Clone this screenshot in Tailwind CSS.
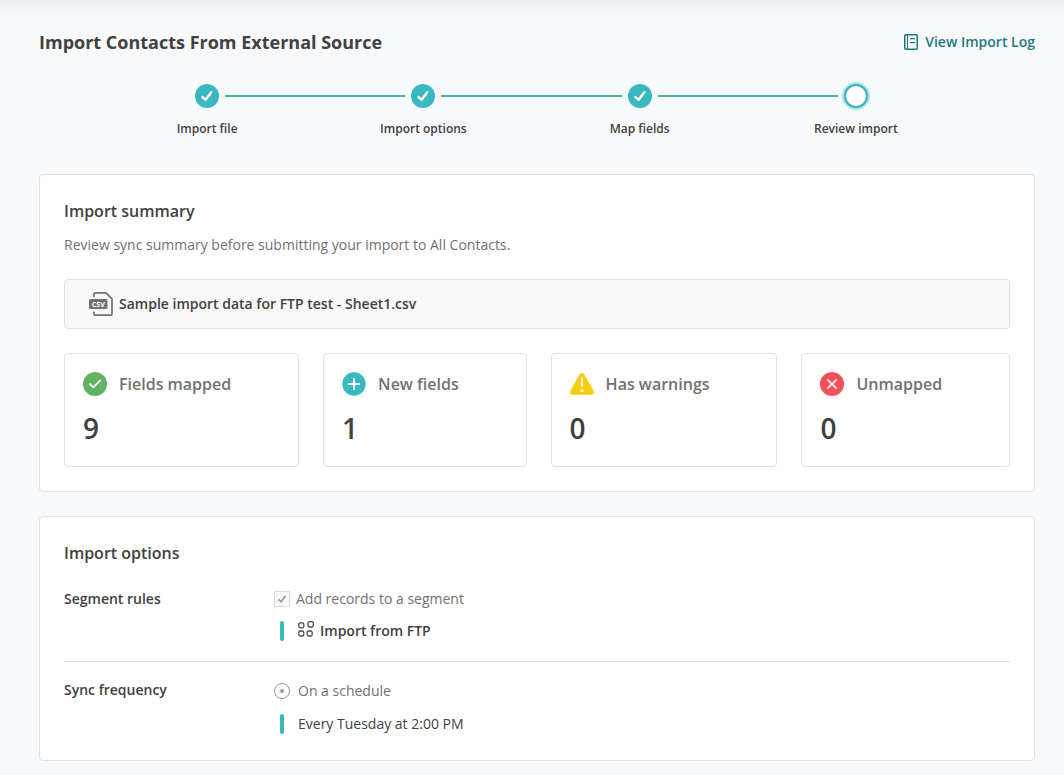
<!DOCTYPE html>
<html lang="en">
<head>
  <meta charset="UTF-8">
  <meta name="viewport" content="width=device-width, initial-scale=1.0">
  <title>Import Contacts From External Source</title>
  <script src="https://cdn.jsdelivr.net/npm/@tailwindcss/browser@4"></script>
</head>
<body class="min-h-screen bg-[#f8f9fb] font-['Open_Sans',sans-serif] text-sm text-[#414141]">
  <div class="h-4 bg-linear-to-b from-[#e9eef4] to-[#f8f9fb]"></div>

  <main class="pl-[39px] pr-[29px] pb-[14px]">
    <!-- Header -->
    <header class="flex items-center justify-between pt-[14px]">
      <h1 class="text-lg leading-6 font-bold">Import Contacts From External Source</h1>
      <a href="#" class="flex items-center gap-[7px] leading-5 font-semibold text-[#1f7a7e]">
        <svg class="w-[14px] h-4" viewBox="0 0 14 16" fill="none" stroke="currentColor">
          <rect x="0.75" y="0.75" width="12.5" height="14.5" rx="1" stroke-width="1.5"/>
          <path d="M3.5 1v14" stroke-width="1.1"/>
          <path d="M6 4.7h5M6 8.7h5" stroke-width="1.2"/>
        </svg>
        View Import Log
      </a>
    </header>

    <!-- Progress steps -->
    <ol class="mt-[30px] ml-[60px] mr-[71px] grid grid-cols-4 text-center text-xs leading-5 font-semibold">
      <li>
        <div class="flex items-center">
          <span class="h-0.5 flex-1"></span>
          <svg class="mx-1.5 size-6" viewBox="0 0 24 24" fill="none">
            <circle cx="12" cy="12" r="12" fill="#3ab8be"/>
            <path d="M7.4 13l3.3 2.8 5.6-7.6" stroke="#fff" stroke-width="2.3" stroke-linecap="round" stroke-linejoin="round"/>
          </svg>
          <span class="h-0.5 flex-1 bg-[#4fb0b5]"></span>
        </div>
        <p class="mt-[11px]">Import file</p>
      </li>
      <li>
        <div class="flex items-center">
          <span class="h-0.5 flex-1 bg-[#4fb0b5]"></span>
          <svg class="mx-1.5 size-6" viewBox="0 0 24 24" fill="none">
            <circle cx="12" cy="12" r="12" fill="#3ab8be"/>
            <path d="M7.4 13l3.3 2.8 5.6-7.6" stroke="#fff" stroke-width="2.3" stroke-linecap="round" stroke-linejoin="round"/>
          </svg>
          <span class="h-0.5 flex-1 bg-[#4fb0b5]"></span>
        </div>
        <p class="mt-[11px]">Import options</p>
      </li>
      <li>
        <div class="flex items-center">
          <span class="h-0.5 flex-1 bg-[#4fb0b5]"></span>
          <svg class="mx-1.5 size-6" viewBox="0 0 24 24" fill="none">
            <circle cx="12" cy="12" r="12" fill="#3ab8be"/>
            <path d="M7.4 13l3.3 2.8 5.6-7.6" stroke="#fff" stroke-width="2.3" stroke-linecap="round" stroke-linejoin="round"/>
          </svg>
          <span class="h-0.5 flex-1 bg-[#4fb0b5]"></span>
        </div>
        <p class="mt-[11px]">Map fields</p>
      </li>
      <li>
        <div class="flex items-center">
          <span class="h-0.5 flex-1 bg-[#4fb0b5]"></span>
          <span class="mx-1.5 size-6 rounded-full border-2 border-[#3ab3b9] bg-white ring-2 ring-[#a6e9e9]"></span>
          <span class="h-0.5 flex-1"></span>
        </div>
        <p class="mt-[11px]">Review import</p>
      </li>
    </ol>

    <!-- Import summary -->
    <section class="mt-[35px] rounded border border-[#e0e1e3] bg-white p-6">
      <h2 class="text-base leading-6 font-semibold">Import summary</h2>
      <p class="mt-3 leading-5 text-[#717171]">Review sync summary before submitting your import to All Contacts.</p>

      <div class="mt-6 flex h-[50px] items-center gap-1.5 rounded border border-[#e0e1e3] bg-[#f8f8f8] px-6 font-semibold">
        <svg class="size-6" viewBox="0 0 24 24" fill="none">
          <path d="M4.8 5V2.6Q4.8.9 6.5.9H17l6 6v14.5q0 1.7-1.7 1.7H6.5q-1.7 0-1.7-1.7V19.5" stroke="#717171" stroke-width="1.7"/>
          <rect y="7" width="18.5" height="10" rx="1.5" fill="#717171"/>
          <text x="9.3" y="14.5" text-anchor="middle" font-size="7" font-weight="700" fill="#fff">CSV</text>
        </svg>
        <span>Sample import data for FTP test - Sheet1.csv</span>
      </div>

      <div class="mt-6 flex gap-6">
        <div class="flex-auto rounded border border-[#e0e1e3] p-[18px]">
          <div class="flex items-center gap-3">
            <svg class="size-6" viewBox="0 0 24 24" fill="none">
              <circle cx="12" cy="12" r="12" fill="#62b264"/>
              <path d="M7 12.2l3.4 3.2 6.8-7" stroke="#fff" stroke-width="1.8" stroke-linecap="round" stroke-linejoin="round"/>
            </svg>
            <h3 class="text-base leading-6 font-semibold text-[#717171]">Fields mapped</h3>
          </div>
          <p class="mt-3 text-[28px] leading-10 font-semibold">9</p>
        </div>
        <div class="flex-auto rounded border border-[#e0e1e3] p-[18px]">
          <div class="flex items-center gap-3">
            <svg class="size-6" viewBox="0 0 24 24" fill="none">
              <circle cx="12" cy="12" r="11.7" fill="#3ab8be"/>
              <path d="M12 6.8v10.4M6.8 12h10.4" stroke="#fff" stroke-width="1.8" stroke-linecap="round"/>
            </svg>
            <h3 class="text-base leading-6 font-semibold text-[#717171]">New fields</h3>
          </div>
          <p class="mt-3 text-[28px] leading-10 font-semibold">1</p>
        </div>
        <div class="flex-auto rounded border border-[#e0e1e3] p-[18px]">
          <div class="flex items-center gap-3">
            <svg class="size-6" viewBox="0 0 24 24" fill="none">
              <path d="M9.6 2.4Q12-.4 14.4 2.4L23.5 18.6Q25 22.8 21 22.8H3Q-1 22.8.5 18.6Z" fill="#facd0a"/>
              <path d="M12 6.5v7.7" stroke="#fff" stroke-width="1.8" stroke-linecap="round"/>
              <circle cx="12" cy="18.5" r="1.5" fill="#fff"/>
            </svg>
            <h3 class="text-base leading-6 font-semibold text-[#717171]">Has warnings</h3>
          </div>
          <p class="mt-3 text-[28px] leading-10 font-semibold">0</p>
        </div>
        <div class="flex-auto rounded border border-[#e0e1e3] p-[18px]">
          <div class="flex items-center gap-3">
            <svg class="size-6" viewBox="0 0 24 24" fill="none">
              <circle cx="12" cy="12" r="12" fill="#f05257"/>
              <path d="M7.8 7.8l8.4 8.4M16.2 7.8l-8.4 8.4" stroke="#fff" stroke-width="1.7" stroke-linecap="round"/>
            </svg>
            <h3 class="text-base leading-6 font-semibold text-[#717171]">Unmapped</h3>
          </div>
          <p class="mt-3 text-[28px] leading-10 font-semibold">0</p>
        </div>
      </div>
    </section>

    <!-- Import options -->
    <section class="mt-6 rounded border border-[#e0e1e3] bg-white px-6 pt-6 pb-[26px]">
      <h2 class="text-base leading-6 font-semibold">Import options</h2>

      <div class="mt-6 flex border-b border-[#e0e1e3] pb-5 leading-5">
        <h3 class="w-[210px] font-semibold">Segment rules</h3>
        <div>
          <label class="flex items-center gap-1.5 text-[#717171]">
            <span class="grid size-4">
              <input type="checkbox" checked disabled class="col-start-1 row-start-1 size-4 appearance-none rounded-[1px] border border-[#d9d9d9] bg-[#f8f8f8]">
              <svg class="col-start-1 row-start-1 size-4" viewBox="0 0 16 16" fill="none" stroke="#999" stroke-width="1.7">
                <path d="M4.5 8.5l2.6 2.2 4.4-6"/>
              </svg>
            </span>
            Add records to a segment
          </label>
          <div class="mt-3 ml-1.5 flex items-center">
            <span class="h-5 w-1 rounded-xs bg-[#3ab8be]"></span>
            <svg class="ml-[14px] mr-1.5 mb-1 size-4" viewBox="0 0 16 16" fill="none" stroke="#484848" stroke-width="1.3">
              <rect x="0.8" y="1.8" width="5" height="5" rx="1.5"/>
              <rect x="10" y="0.7" width="5.3" height="5.3" rx="1.7"/>
              <rect x="0.8" y="10" width="5" height="5" rx="1.5"/>
              <rect x="9.2" y="10" width="5" height="5" rx="1.5"/>
            </svg>
            <span class="font-semibold">Import from FTP</span>
          </div>
        </div>
      </div>

      <div class="flex pt-[18px] leading-5">
        <h3 class="w-[210px] font-semibold">Sync frequency</h3>
        <div>
          <label class="flex h-[22px] items-center gap-2 text-[#717171]">
            <input type="radio" name="frequency" checked disabled class="size-4 appearance-none rounded-full border border-[#999] bg-[radial-gradient(circle,#999_0_1px,#fff_3px)]">
            On a schedule
          </label>
          <div class="mt-3 ml-1.5 flex items-center gap-[14px]">
            <span class="h-5 w-1 rounded-xs bg-[#3ab8be]"></span>
            <span>Every Tuesday at 2:00 PM</span>
          </div>
        </div>
      </div>
    </section>
  </main>
</body>
</html>
